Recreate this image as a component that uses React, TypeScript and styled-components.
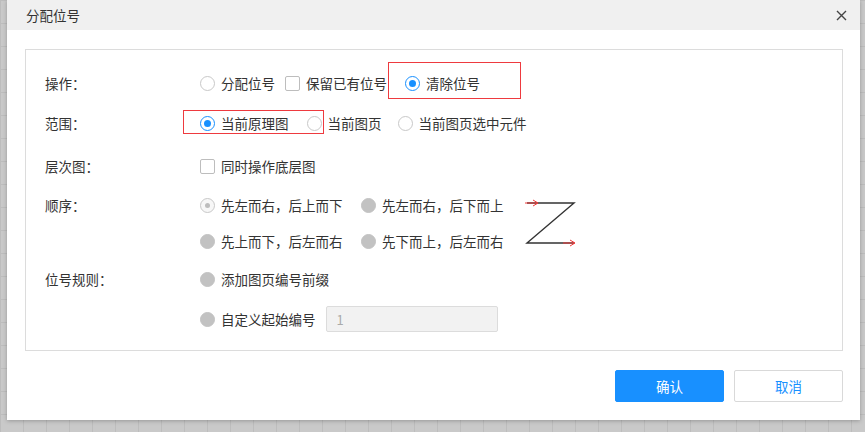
import styled, { createGlobalStyle } from "styled-components";

const GlobalStyle = createGlobalStyle`
  html, body {
    margin: 0;
    padding: 0;
  }
  body {
    width: 865px;
    height: 432px;
    overflow: hidden;
    background-color: #c9c9c9;
    background-image: linear-gradient(to right, #bdbdbd 1px, transparent 1px),
      linear-gradient(to bottom, #bdbdbd 1px, transparent 1px);
    background-size: 23px 23px;
    font-family: "Noto Sans CJK SC", "Noto Sans", sans-serif;
  }
`;

type RadioState = "off" | "on" | "disabled" | "disabledOn";

const Dialog = styled.div`
  margin-left: 7px;
  width: 853px;
  height: 420px;
  background: #fff;
  box-shadow: 0 1px 4px rgba(0, 0, 0, 0.25);
  display: flex;
  flex-direction: column;
`;

const Header = styled.div`
  height: 30px;
  flex-shrink: 0;
  background: #f0f0f0;
  display: flex;
  align-items: center;
  justify-content: space-between;
  padding: 0 13px 0 19px;
`;

const Title = styled.span`
  font-size: 13.5px;
  color: #333;
`;

const CloseButton = styled.button`
  width: 12px;
  height: 12px;
  padding: 0;
  border: none;
  background: none;
  display: flex;
  align-items: center;
  justify-content: center;
  cursor: pointer;
`;

const Body = styled.div`
  padding: 19px 17px 0 18px;
`;

const FormBox = styled.div`
  border: 1px solid #dcdcdc;
  padding: 21px 0 17px 19px;
`;

const Field = styled.div<{ $mt?: number }>`
  display: grid;
  grid-template-columns: 155px 1fr;
  margin-top: ${({ $mt }) => $mt ?? 0}px;
`;

const Label = styled.div`
  font-size: 13.5px;
  line-height: 24px;
  color: #333;
`;

const Line = styled.div<{ $h?: number }>`
  display: flex;
  align-items: center;
  height: ${({ $h }) => $h ?? 24}px;
  gap: 18px;
`;

const Stack = styled.div<{ $gap: number }>`
  display: flex;
  flex-direction: column;
  gap: ${({ $gap }) => $gap}px;
`;

const Option = styled.span<{ $ml?: number }>`
  display: inline-flex;
  align-items: center;
  gap: 6px;
  font-size: 13.5px;
  color: #333;
  white-space: nowrap;
  margin-left: ${({ $ml }) => $ml ?? 0}px;
`;

const Radio = styled.span<{ $state: RadioState }>`
  width: 15px;
  height: 15px;
  box-sizing: border-box;
  border-radius: 50%;
  flex-shrink: 0;
  display: inline-flex;
  align-items: center;
  justify-content: center;
  border: 1px solid
    ${({ $state }) =>
      $state === "on" ? "#1890ff" : $state === "disabled" ? "#c2c2c2" : "#c8c8c8"};
  background: ${({ $state }) =>
    $state === "disabled" ? "#c2c2c2" : $state === "disabledOn" ? "#f7f7f7" : "#fff"};

  &::after {
    content: "";
    display: ${({ $state }) => ($state === "on" || $state === "disabledOn" ? "block" : "none")};
    width: ${({ $state }) => ($state === "on" ? 7 : 5)}px;
    height: ${({ $state }) => ($state === "on" ? 7 : 5)}px;
    border-radius: 50%;
    background: ${({ $state }) => ($state === "on" ? "#1890ff" : "#bdbdbd")};
  }
`;

const Checkbox = styled.span`
  width: 15px;
  height: 15px;
  box-sizing: border-box;
  border: 1px solid #bdbdbd;
  border-radius: 2px;
  background: #fff;
  flex-shrink: 0;
`;

const Highlight = styled.span<{ $t: number; $r: number; $b: number; $l: number }>`
  position: relative;
  display: inline-flex;

  &::after {
    content: "";
    position: absolute;
    top: ${({ $t }) => $t}px;
    right: ${({ $r }) => $r}px;
    bottom: ${({ $b }) => $b}px;
    left: ${({ $l }) => $l}px;
    border: 1.5px solid #ee3a3f;
    pointer-events: none;
  }
`;

const OrderWrap = styled.div`
  display: flex;
  align-items: flex-start;
`;

const OrderGrid = styled.div`
  display: grid;
  grid-template-columns: 161px auto;
  row-gap: 12px;
`;

const OrderLine = styled.div`
  display: flex;
  align-items: center;
  height: 24px;
`;

const ZIcon = styled.svg`
  margin: 5px 0 0 21px;
  flex-shrink: 0;
`;

const NumberInput = styled.input`
  width: 172px;
  height: 26px;
  box-sizing: border-box;
  margin-left: -8px;
  padding: 0 10px;
  border: 1px solid #dcdcdc;
  border-radius: 2px;
  background: #f2f2f2;
  color: #aaa;
  font-family: inherit;
  font-size: 13px;
  outline: none;
`;

const Footer = styled.div`
  display: flex;
  justify-content: flex-end;
  gap: 10px;
  padding: 19px 17px 0 0;
`;

const Button = styled.button<{ $primary?: boolean }>`
  width: 109px;
  height: 32px;
  border-radius: 2px;
  font-family: inherit;
  font-size: 13.5px;
  cursor: pointer;
  border: 1px solid ${({ $primary }) => ($primary ? "#1890ff" : "#d9d9d9")};
  background: ${({ $primary }) => ($primary ? "#1890ff" : "#fff")};
  color: ${({ $primary }) => ($primary ? "#fff" : "#1890ff")};
`;

const App = () => {
  return (
    <>
      <GlobalStyle />
      <Dialog>
        <Header>
          <Title>分配位号</Title>
          <CloseButton aria-label="关闭">
            <svg width="11" height="11" viewBox="0 0 11 11">
              <path d="M1 1L10 10M10 1L1 10" stroke="#444" strokeWidth="1.4" />
            </svg>
          </CloseButton>
        </Header>
        <Body>
          <FormBox>
            <Field>
              <Label>操作：</Label>
              <Line>
                <Option>
                  <Radio $state="off" />
                  分配位号
                </Option>
                <Option $ml={-8}>
                  <Checkbox />
                  保留已有位号
                </Option>
                <Highlight $t={-11} $r={-41} $b={-6} $l={-17}>
                  <Option>
                    <Radio $state="on" />
                    清除位号
                  </Option>
                </Highlight>
              </Line>
            </Field>

            <Field $mt={16}>
              <Label>范围：</Label>
              <Line>
                <Highlight $t={-3} $r={-35} $b={-1} $l={-17}>
                  <Option>
                    <Radio $state="on" />
                    当前原理图
                  </Option>
                </Highlight>
                <Option>
                  <Radio $state="off" />
                  当前图页
                </Option>
                <Option $ml={-2}>
                  <Radio $state="off" />
                  当前图页选中元件
                </Option>
              </Line>
            </Field>

            <Field $mt={19}>
              <Label>层次图：</Label>
              <Line>
                <Option>
                  <Checkbox />
                  同时操作底层图
                </Option>
              </Line>
            </Field>

            <Field $mt={15}>
              <Label>顺序：</Label>
              <OrderWrap>
                <OrderGrid>
                  <OrderLine>
                    <Option>
                      <Radio $state="disabledOn" />
                      先左而右，后上而下
                    </Option>
                  </OrderLine>
                  <OrderLine>
                    <Option>
                      <Radio $state="disabled" />
                      先左而右，后下而上
                    </Option>
                  </OrderLine>
                  <OrderLine>
                    <Option>
                      <Radio $state="disabled" />
                      先上而下，后左而右
                    </Option>
                  </OrderLine>
                  <OrderLine>
                    <Option>
                      <Radio $state="disabled" />
                      先下而上，后左而右
                    </Option>
                  </OrderLine>
                </OrderGrid>
                <ZIcon width="52" height="50" viewBox="0 0 52 50">
                  <path d="M2 5H49L2 45H49" fill="none" stroke="#333" strokeWidth="1.4" />
                  <path d="M0 5H13M8 2L13 5L8 8" fill="none" stroke="#f03a3a" strokeWidth="1" />
                  <path d="M38 45H50M45 42L50 45L45 48" fill="none" stroke="#f03a3a" strokeWidth="1" />
                </ZIcon>
              </OrderWrap>
            </Field>

            <Field $mt={14}>
              <Label>位号规则：</Label>
              <Stack $gap={14}>
                <Line>
                  <Option>
                    <Radio $state="disabled" />
                    添加图页编号前缀
                  </Option>
                </Line>
                <Line $h={28}>
                  <Option>
                    <Radio $state="disabled" />
                    自定义起始编号
                  </Option>
                  <NumberInput defaultValue="1" disabled />
                </Line>
              </Stack>
            </Field>
          </FormBox>
        </Body>
        <Footer>
          <Button $primary>确认</Button>
          <Button>取消</Button>
        </Footer>
      </Dialog>
    </>
  );
};

export default App;
